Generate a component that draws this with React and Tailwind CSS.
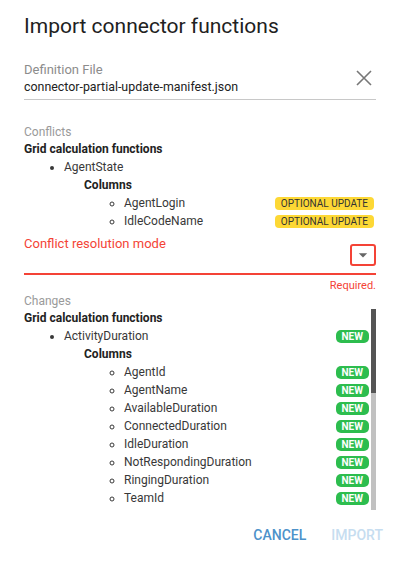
import React from "react";

const OptBadge = () => (
  <span className="flex h-[13px] items-center rounded-[4px] bg-[#fdd835] px-[6px] text-[10px] leading-[13px] text-[#333]">
    OPTIONAL UPDATE
  </span>
);

const NewBadge = () => (
  <span className="flex h-[13px] items-center rounded-[5px] bg-[#2dbd4e] px-[6px] text-[10px] font-bold leading-[13px] text-white">
    NEW
  </span>
);

const Row = ({ label, badge }) => (
  <div className="flex h-[18px] items-center justify-between">
    <span>{label}</span>
    {badge}
  </div>
);

const changeColumns = [
  "AgentId",
  "AgentName",
  "AvailableDuration",
  "ConnectedDuration",
  "IdleDuration",
  "NotRespondingDuration",
  "RingingDuration",
  "TeamId",
  "WrapUpDuration",
];

export default function App() {
  return (
    <div className="flex h-[561px] w-[400px] flex-col bg-white font-['Roboto',sans-serif] text-[#383838]">
      <div className="flex flex-col px-6">
        <h1 className="pt-3 text-[21px] font-normal leading-[28px] text-[#212121]">
          Import connector functions
        </h1>

        {/* Definition file field */}
        <div className="mt-[22px] flex items-end border-b border-[#c8c8c8] pb-[3px]">
          <div className="flex min-w-0 flex-1 flex-col">
            <span className="text-[13px] leading-[16px] text-[#8c8c8c]">Definition File</span>
            <span className="text-[12.4px] leading-[18px] text-[#222]">
              connector-partial-update-manifest.json
            </span>
          </div>
          <svg viewBox="0 0 24 24" className="mb-[6px] h-6 w-6" fill="none" stroke="#777" strokeWidth="1.6">
            <path d="M5 5 19 19M19 5 5 19" />
          </svg>
        </div>

        {/* Conflicts */}
        <div className="mt-[25px] text-[12px] leading-[15px] text-[#9a9a9a]">Conflicts</div>
        <div className="pr-[2px] text-[12px] leading-[18px]">
          <div className="h-[18px] font-bold text-[#222]">Grid calculation functions</div>
          <ul className="list-disc pl-10">
            <li>
              <Row label="AgentState" />
              <div className="h-[18px] pl-5 font-bold text-[#222]">Columns</div>
              <ul className="list-[circle] pl-[60px]">
                <li>
                  <Row label="AgentLogin" badge={<OptBadge />} />
                </li>
                <li>
                  <Row label="IdleCodeName" badge={<OptBadge />} />
                </li>
              </ul>
            </li>
          </ul>
        </div>

        {/* Conflict resolution mode */}
        <div className="mt-[6px] flex items-start justify-between">
          <span className="text-[13px] leading-[16px] text-[#f44336]">Conflict resolution mode</span>
          <div className="mt-[8px] flex h-[22px] w-[26px] items-center justify-center rounded-[3px] border-2 border-[#f44336]">
            <svg viewBox="0 0 24 24" className="h-5 w-5 fill-[#666]">
              <path d="M7 10l5 5 5-5z" />
            </svg>
          </div>
        </div>
        <div className="mt-[7px] h-[2px] bg-[#f44336]" />
        <div className="mt-[4px] text-right text-[11px] leading-[14px] text-[#f44336]">Required.</div>

        {/* Changes */}
        <div className="mt-[1px] text-[12px] leading-[15px] text-[#9a9a9a]">Changes</div>
        <div className="flex h-[201px]">
          <div className="min-w-0 flex-1 overflow-hidden pr-[2px] text-[12px] leading-[18px]">
            <div className="h-[18px] font-bold text-[#222]">Grid calculation functions</div>
            <ul className="list-disc pl-10">
              <li>
                <Row label="ActivityDuration" badge={<NewBadge />} />
                <div className="h-[18px] pl-5 font-bold text-[#222]">Columns</div>
                <ul className="list-[circle] pl-[60px]">
                  {changeColumns.map((c) => (
                    <li key={c}>
                      <Row label={c} badge={<NewBadge />} />
                    </li>
                  ))}
                </ul>
              </li>
            </ul>
          </div>
          <div className="flex w-[5px] flex-col bg-[#c1c1c1]">
            <div className="h-[84px] bg-[#555]" />
          </div>
        </div>
      </div>

      {/* Footer */}
      <div className="mt-[7px] flex justify-end gap-[9px] pr-[9px]">
        <button className="px-2 py-[10px] text-[14px] font-medium leading-[16px] text-[#4d92ca]">
          CANCEL
        </button>
        <button className="px-2 py-[10px] text-[14px] font-medium leading-[16px] text-[#c6ddf0]">
          IMPORT
        </button>
      </div>
    </div>
  );
}
